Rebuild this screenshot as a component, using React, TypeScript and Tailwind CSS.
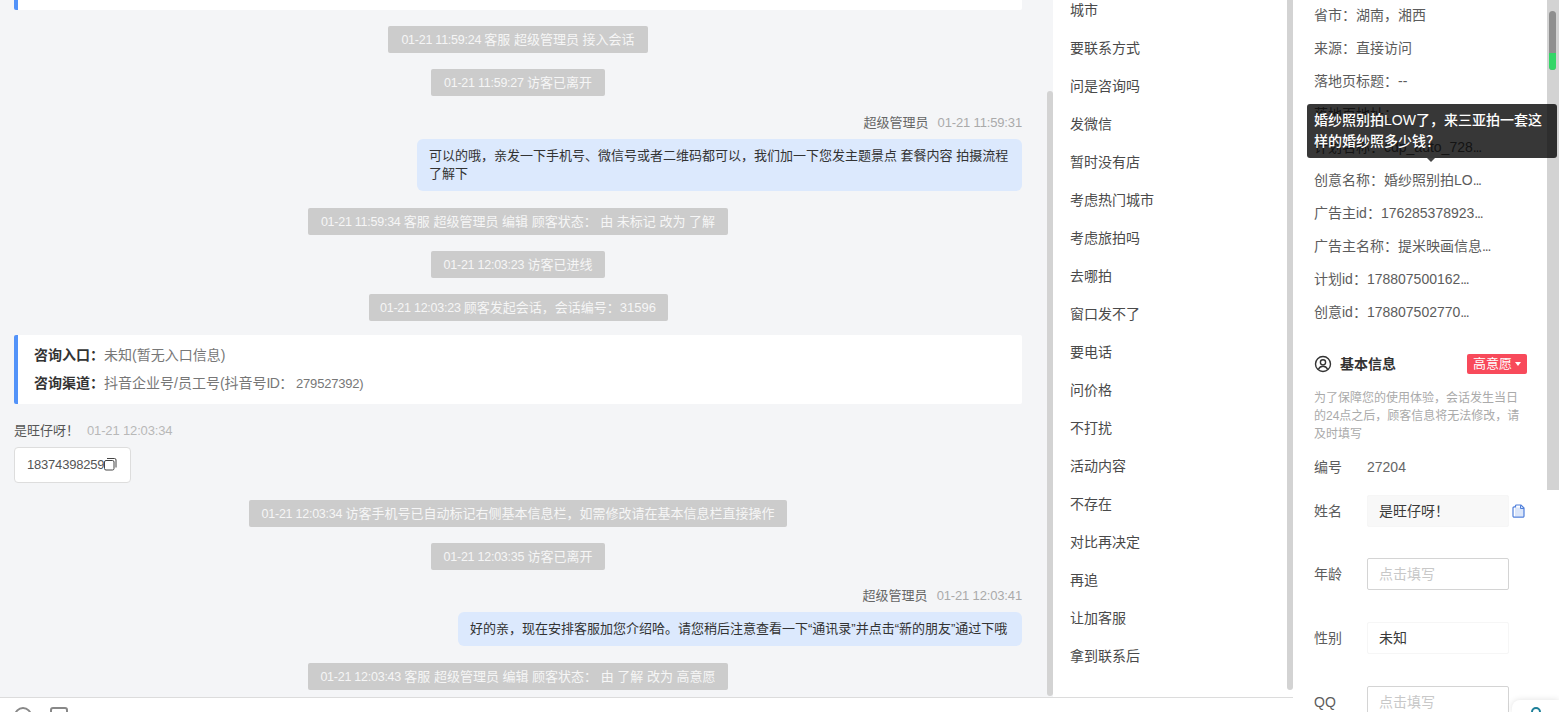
import React from "react";

const font = "font-['Liberation_Sans','Noto_Sans_CJK_SC',sans-serif]";

function Sys({ time, text, w, mb = "mb-[16px]" }: { time: string; text: string; w: string; mb?: string }) {
  return (
    <div className={`flex justify-center ${mb}`}>
      <div className={`h-[27px] ${w} shrink-0 rounded-[2px] bg-[#cccccc] text-center text-[13px] leading-[27px] text-[#f6f6f6] whitespace-nowrap`}>
        <span className="text-[12.5px] tracking-[-0.25px]">{time} </span>
        {text}
      </div>
    </div>
  );
}

function Me({ name, time, children, w }: { name: string; time: string; children: React.ReactNode; w: string }) {
  return (
    <div className="flex flex-col items-end">
      <div className="h-[18px] text-[13px] leading-[18px] whitespace-nowrap">
        <span className="text-[#666666]">{name}</span>
        <span className="ml-[9px] tracking-[-0.15px] text-[#aaaaaa]">{time}</span>
      </div>
      <div className={`mt-[7px] ${w} rounded-[6px] bg-[#dce9fd] px-3 py-2 text-[13px] leading-[18px] text-[#333333]`}>{children}</div>
    </div>
  );
}

const tags = ["城市", "要联系方式", "问是咨询吗", "发微信", "暂时没有店", "考虑热门城市", "考虑旅拍吗", "去哪拍", "窗口发不了", "要电话", "问价格", "不打扰", "活动内容", "不存在", "对比再决定", "再追", "让加客服", "拿到联系后"];

const infos = ["创意名称：婚纱照别拍LO", "广告主id：176285378923", "广告主名称：提米映画信息", "计划id：178807500162", "创意id：178807502770"];

function Dots() {
  return <span className="tracking-[-1.2px]">...</span>;
}

function FormRow({ label, value, placeholder, filled, bordered, icon, mt }: { label: string; value?: string; placeholder?: string; filled?: boolean; bordered?: boolean; icon?: boolean; mt: string }) {
  return (
    <div className={`flex items-center ${mt}`}>
      <div className="w-[53px] text-[14px] text-[#5c5c5c]">{label}</div>
      <div className={`h-[32px] w-[142px] shrink-0 rounded-[2px] px-[11px] text-[14px] leading-[30px] border ${bordered ? "border-[#d4d4d4]" : "border-[#f6f6f6]"} ${filled ? "bg-[#f8f8f8]" : "bg-white"} ${placeholder ? "text-[#c8c8c8]" : "text-[#3a3a3a]"}`}>
        {value ?? placeholder}
      </div>
      {icon && (
        <svg className="ml-[3px]" width="13" height="14" viewBox="0 0 13 14" fill="none">
          <path d="M3 3.500h5.500v-2L12 5v7.500H3z" fill="#dbe6fa" />
          <path d="M3.500 2.800V1.900A1 1 0 0 1 4.500 1H9l3 3v8a1.200 1.200 0 0 1-1.200 1.200H2.200A1.200 1.200 0 0 1 1 12V4a1.200 1.200 0 0 1 1.200-1.200z" stroke="#4f7fdb" strokeWidth="1.200" />
          <path d="M8.500 1.200v3.300H12" stroke="#4f7fdb" strokeWidth="1" />
        </svg>
      )}
    </div>
  );
}

export default function App() {
  return (
    <div className={`${font} relative flex h-[712px] w-[1559px] flex-col overflow-hidden bg-white`}>
      <div className="flex h-[697px] w-[1293px] shrink-0">
        <main className="w-[1047px] shrink-0 overflow-hidden bg-[#f4f5f7] pl-[14px] pr-[25px]">
          <div className="h-[10px] rounded-b-[2px] border-l-[4px] border-[#5393f9] bg-white" />
          <div className="mt-[16px]">
            <Sys time="01-21 11:59:24" text="客服 超级管理员 接入会话" w="w-[260px]" />
            <Sys time="01-21 11:59:27" text="访客已离开" w="w-[174px]" mb="mb-[18px]" />
            <Me name="超级管理员" time="01-21 11:59:31" w="w-[605px]">可以的哦，亲发一下手机号、微信号或者二维码都可以，我们加一下您发主题景点 套餐内容 拍摄流程了解下</Me>
            <div className="h-[17px]" />
            <Sys time="01-21 11:59:34" text="客服 超级管理员 编辑 顾客状态： 由 未标记 改为 了解" w="w-[420px]" />
            <Sys time="01-21 12:03:23" text="访客已进线" w="w-[174px]" />
            <Sys time="01-21 12:03:23" text="顾客发起会话，会话编号：31596" w="w-[299px]" mb="mb-[14px]" />
            <div className="h-[69px] rounded-[2px] border-l-[4px] border-[#5393f9] bg-white pl-[16px] pt-[6px] text-[14px] leading-[28px] text-[#777777]">
              <div><b className="font-bold text-[#333333]">咨询入口：</b>未知(暂无入口信息)</div>
              <div><b className="font-bold text-[#333333]">咨询渠道：</b>抖音企业号/员工号(抖音号<span className="tracking-[-0.6px]">ID： </span><span className="text-[13px] tracking-[-0.2px]">279527392)</span></div>
            </div>
            <div className="mt-[18px] h-[18px] text-[13px] leading-[18px] whitespace-nowrap">
              <span className="text-[#555555]">是旺仔呀！</span>
              <span className="ml-[8px] tracking-[-0.15px] text-[#b8b8b8]">01-21 12:03:34</span>
            </div>
            <div className="mt-[7px] flex h-[36px] w-[117px] items-center rounded-[4px] border border-[#dddddd] bg-white pl-[12px] text-[13px] tracking-[-0.2px] text-[#555555]">
              18374398259
              <svg className="mb-[2px] shrink-0" width="13" height="13" viewBox="0 0 13 13" fill="none" stroke="#444444" strokeWidth="1">
                <rect x="0.500" y="2.500" width="9.500" height="9.500" rx="1.500" />
                <path d="M3 0.500h7.500a1.500 1.500 0 0 1 1.500 1.500v7.500" />
              </svg>
            </div>
            <div className="h-[17px]" />
            <Sys time="01-21 12:03:34" text="访客手机号已自动标记右侧基本信息栏，如需修改请在基本信息栏直接操作" w="w-[538px]" />
            <Sys time="01-21 12:03:35" text="访客已离开" w="w-[174px]" mb="mb-[17px]" />
            <Me name="超级管理员" time="01-21 12:03:41" w="w-[564px]">好的亲，现在安排客服加您介绍哈。请您稍后注意查看一下“通讯录”并点击“新的朋友”通过下哦</Me>
            <div className="h-[17px]" />
            <Sys time="01-21 12:03:43" text="客服 超级管理员 编辑 顾客状态： 由 了解 改为 高意愿" w="w-[420px]" />
          </div>
        </main>
        <div className="flex w-[6px] shrink-0 flex-col bg-[#f4f5f7]">
          <div className="mt-[91px] h-[605px] rounded-[3px] bg-[#d3d3d3]" />
        </div>
        <aside className="w-[234px] shrink-0 overflow-hidden bg-white pl-[17px] pt-[1px] text-[#4a4a4a]">
          {tags.map((t) => (
            <div key={t} className="h-[38px] text-[14px] leading-[18px]">{t}</div>
          ))}
        </aside>
        <div className="w-[6px] shrink-0 bg-white">
          <div className="h-[690px] rounded-b-[3px] bg-[#d3d3d3]" />
        </div>
      </div>
      <div className="relative h-[15px] w-[1293px] shrink-0 overflow-hidden border-t border-[#dcdcdc] bg-white">
        <div className="absolute left-[14px] top-[9px] h-[18px] w-[18px] rounded-full border-2 border-[#888888]" />
        <div className="absolute left-[50px] top-[9px] h-[18px] w-[18px] rounded-[3px] border-2 border-[#888888]" />
      </div>

      <section className="absolute right-[12px] top-0 h-[712px] w-[254px] overflow-hidden bg-white pl-[21px] text-[14px] text-[#5c5c5c]">
        <div className="flex h-[352px] flex-col pt-[6px] leading-[18px] whitespace-nowrap">
          <div className="h-[33px] shrink-0">省市：湖南，湘西</div>
          <div className="h-[33px] shrink-0">来源：直接访问</div>
          <div className="h-[33px] shrink-0">落地页标题：--</div>
          <div className="h-[33px] shrink-0">落地页地址：</div>
          <div className="h-[33px] shrink-0">计划名称：cdp_auto_728<Dots /></div>
          {infos.map((t) => (
            <div key={t} className="h-[33px] shrink-0">{t}<Dots /></div>
          ))}
        </div>
        <div className="flex h-[24px] w-[213px] items-center justify-between">
          <div className="flex items-center gap-[8px] text-[14px] font-bold text-[#333333]">
            <svg width="18" height="18" viewBox="0 0 18 18" fill="none" stroke="#333333" strokeWidth="1.400">
              <circle cx="9" cy="9" r="7.500" />
              <circle cx="9" cy="7.300" r="2.600" />
              <path d="M4.400 14.200c1-2 2.700-3 4.600-3s3.600 1 4.600 3" />
            </svg>
            基本信息
          </div>
          <div className="flex h-[20px] w-[60px] items-center justify-center gap-[3px] rounded-[2px] bg-[#f84a5b] text-[13px] text-white">
            高意愿
            <span className="h-0 w-0 border-x-[3px] border-t-[4px] border-x-transparent border-t-white" />
          </div>
        </div>
        <div className="mt-[13px] w-[213px] text-[12px] leading-[18px] text-[#aaaaaa]">为了保障您的使用体验，会话发生当日的24点之后，顾客信息将无法修改，请及时填写</div>
        <div className="mt-[15px] flex h-[18px] items-center leading-[18px]">
          <div className="w-[53px]">编号</div>
          <div className="text-[#666666]">27204</div>
        </div>
        <FormRow label="姓名" value="是旺仔呀！" filled icon mt="mt-[19px]" />
        <FormRow label="年龄" placeholder="点击填写" bordered mt="mt-[31px]" />
        <FormRow label="性别" value="未知" mt="mt-[32px]" />
        <FormRow label="QQ" placeholder="点击填写" bordered mt="mt-[32px]" />
      </section>

      <div className="absolute right-0 top-0 h-[712px] w-[12px] bg-[#d3d3d3]" />
      <div className="absolute right-[3px] top-[11px] h-[59px] w-[7px] overflow-hidden rounded-[4px] bg-[#8f8f8f]">
        <div className="mt-[42px] h-[17px] bg-[#33d667]" />
      </div>
      <div className="absolute right-0 top-[490px] h-[222px] w-[12px] bg-white" />
      <div className="absolute right-0 top-[700px] h-[12px] w-[47px] rounded-tl-[8px] bg-white shadow-[0_0_6px_rgba(0,0,0,0.12)]">
        <div className="absolute left-[19px] top-[7px] h-[10px] w-[10px] rounded-full border-2 border-[#1d7f99]" />
      </div>

      <div className="absolute left-[1307px] top-[104px] h-[54px] w-[250px] rounded-[3px] bg-[#000000c8] px-[7px] py-[6px] text-[14px] font-medium leading-[21px] text-white">
        婚纱照别拍LOW了，来三亚拍一套这样的婚纱照多少钱？
        <span className="absolute left-[120px] top-[54px] h-0 w-0 border-x-[4px] border-t-[4px] border-x-transparent border-t-[#444444]" />
      </div>
    </div>
  );
}
